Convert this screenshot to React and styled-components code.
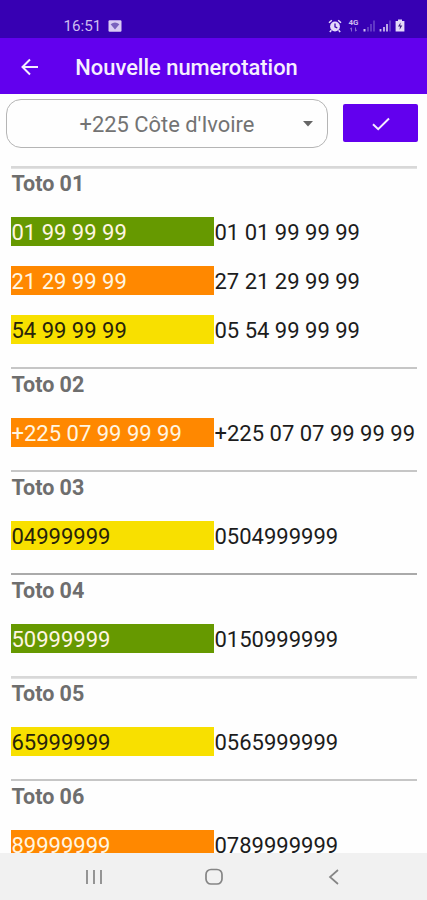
import React from "react";
import styled, { createGlobalStyle } from "styled-components";

const contacts = [
  {
    name: "Toto 01",
    soft: true,
    numbers: [
      ["01 99 99 99", "01 01 99 99 99", "green"],
      ["21 29 99 99", "27 21 29 99 99", "orange"],
      ["54 99 99 99", "05 54 99 99 99", "yellow"],
    ],
  },
  {
    name: "Toto 02",
    numbers: [["+225 07 99 99 99", "+225 07 07 99 99 99", "orange"]],
  },
  { name: "Toto 03", numbers: [["04999999", "0504999999", "yellow"]] },
  { name: "Toto 04", dark: true, numbers: [["50999999", "0150999999", "green"]] },
  { name: "Toto 05", soft: true, numbers: [["65999999", "0565999999", "yellow"]] },
  { name: "Toto 06", numbers: [["89999999", "0789999999", "orange"]] },
];

const operators = {
  green: "#669900",
  orange: "#ff8800",
  yellow: "#f8e000",
};

function App() {
  return (
    <Screen>
      <GlobalStyle />
      <StatusBar>
        <Clock>16:51</Clock>
        <WifiCard />
        <StatusIcons />
      </StatusBar>
      <AppBar>
        <BackArrow viewBox="0 0 18 18">
          <path d="M17 9H1.5M9 1.5L1.5 9L9 16.5" />
        </BackArrow>
        <Title>Nouvelle numerotation</Title>
      </AppBar>
      <Toolbar>
        <Select>
          <Country>+225 Côte d'Ivoire</Country>
          <Caret viewBox="0 0 10 6">
            <path d="M0 0H10L5 5.5Z" />
          </Caret>
        </Select>
        <Confirm>
          <Check viewBox="0 0 18 14">
            <path d="M1 7.2L6.2 12.2L17 1.5" />
          </Check>
        </Confirm>
      </Toolbar>
      <List>
        {contacts.map((contact) => (
          <Contact key={contact.name}>
            <Divider $soft={contact.soft} $dark={contact.dark} />
            <Name>{contact.name}</Name>
            {contact.numbers.map(([before, after, operator]) => (
              <Row key={before}>
                <OldNumber $operator={operator}>{before}</OldNumber>
                <NewNumber>{after}</NewNumber>
              </Row>
            ))}
          </Contact>
        ))}
      </List>
      <NavBar>
        <NavIcon viewBox="0 0 18 18">
          <path d="M2 2V16M9 2V16M16 2V16" />
        </NavIcon>
        <NavIcon viewBox="0 0 18 18">
          <rect x="1" y="1.5" width="16" height="14.5" rx="5" />
        </NavIcon>
        <NavIcon viewBox="0 0 18 18">
          <path d="M13 2L5 9L13 16" />
        </NavIcon>
      </NavBar>
    </Screen>
  );
}

function WifiCard() {
  return (
    <svg width="14" height="12" viewBox="0 0 14 12">
      <rect x="0.5" y="0.3" width="13" height="11.4" rx="1.2" fill="#d9ccf4" />
      <path d="M2.6 4.2Q7 0.8 11.4 4.2L7 9.6Z" fill="#7a62bd" />
    </svg>
  );
}

function StatusIcons() {
  return (
    <Indicators>
      <svg width="14" height="14" viewBox="0 0 14 14">
        <circle cx="7" cy="7.5" r="4.9" fill="#e4dafa" />
        <path
          d="M1 3.8L3.8 1.2M10.2 1.2L13 3.8M3.4 11.2L1.8 13M10.6 11.2L12.2 13"
          stroke="#e4dafa"
          strokeWidth="1.5"
        />
        <path d="M7 4.5V7.8L9.3 8.8" fill="none" stroke="#3a00b0" strokeWidth="1.3" />
      </svg>
      <Network>
        <NetworkType>4G</NetworkType>
        <svg width="9" height="5" viewBox="0 0 9 5">
          <path d="M2.5 4.5V1M1 2.2L2.5 0.8M6.5 0.5V4M8 2.8L6.5 4.2" fill="none" stroke="#8766d3" />
        </svg>
      </Network>
      <svg width="13" height="13" viewBox="0 0 13 13">
        <path d="M1.5 10V12.5" stroke="#d1c0ef" strokeWidth="2" />
        <path d="M5 8V12.5M8 5V12.5M11 1.5V12.5" stroke="#6841c8" strokeWidth="1.7" />
      </svg>
      <svg width="13" height="13" viewBox="0 0 13 13">
        <path d="M1.5 10V12.5M5 8V12.5M8 5V12.5" stroke="#c8b7eb" strokeWidth="1.8" />
        <path d="M11 1.5V12.5" stroke="#6841c8" strokeWidth="1.7" />
      </svg>
      <svg width="10" height="13" viewBox="0 0 10 13">
        <path d="M3 0.5H7V2H9.4V12.5H0.6V2H3Z" fill="#e4dafa" />
        <path d="M5.6 3.5L3 7.5H5L4.6 10.8L7.3 6.6H5.2Z" fill="#3a1b80" />
      </svg>
    </Indicators>
  );
}

export default App;

const GlobalStyle = createGlobalStyle`
  * {
    box-sizing: border-box;
  }

  body {
    margin: 0;
    background: #fefefe;
    font-family: Roboto, "Liberation Sans", sans-serif;
  }
`;

const Screen = styled.div`
  width: 427px;
  height: 900px;
  display: flex;
  flex-direction: column;
  overflow: hidden;
  background: #fefefe;
`;

const StatusBar = styled.div`
  height: 38px;
  flex-shrink: 0;
  display: flex;
  align-items: center;
  padding: 13px 22px 0 63.5px;
  background: #3700b3;
`;

const Clock = styled.span`
  width: 44.5px;
  font-size: 15.2px;
  line-height: 16px;
  color: #cdbcf0;
`;

const Indicators = styled.div`
  display: flex;
  align-items: center;
  gap: 3px;
  margin-left: auto;
`;

const Network = styled.div`
  width: 13px;
  display: flex;
  flex-direction: column;
  align-items: center;
  margin-left: 2px;
`;

const NetworkType = styled.span`
  font-size: 8px;
  font-weight: 700;
  line-height: 8px;
  color: #cdbcf0;
`;

const AppBar = styled.div`
  height: 56px;
  flex-shrink: 0;
  display: flex;
  align-items: center;
  padding: 1px 20px 0 21px;
  background: #6200ee;
`;

const BackArrow = styled.svg`
  width: 18px;
  height: 18px;
  fill: none;
  stroke: #f4ecfe;
  stroke-width: 2;
`;

const Title = styled.h1`
  margin: 2px 0 0 36.3px;
  font-size: 21.9px;
  font-weight: 500;
  line-height: 28px;
  color: #f6effe;
`;

const Toolbar = styled.div`
  height: 72px;
  flex-shrink: 0;
  display: flex;
  align-items: flex-start;
  padding: 5px 9px 0 6px;
`;

const Select = styled.div`
  width: 322px;
  height: 49px;
  display: flex;
  align-items: center;
  padding-right: 14px;
  border: 1.5px solid #b5b5b5;
  border-radius: 15px;
`;

const Country = styled.span`
  flex: 1;
  padding: 2px 0 0 24px;
  font-size: 21.9px;
  line-height: 28px;
  text-align: center;
  color: #737373;
`;

const Caret = styled.svg`
  width: 10px;
  height: 6px;
  fill: #666;
`;

const Confirm = styled.button`
  width: 75px;
  height: 38px;
  display: flex;
  align-items: center;
  justify-content: center;
  margin: 5px 0 0 auto;
  padding: 2px 0 0;
  border: 0;
  border-radius: 2px;
  background: #6200ee;
`;

const Check = styled.svg`
  width: 18px;
  height: 14px;
  fill: none;
  stroke: #f4ecfe;
  stroke-width: 2;
`;

const List = styled.div`
  flex: 1;
  min-height: 0;
  overflow: hidden;
  padding: 0 10px 0 11px;
`;

const Contact = styled.section`
  padding-bottom: 1px;
`;

const Divider = styled.div`
  height: 2px;
  background: ${(props) => (props.$dark ? "#aaa" : props.$soft ? "#d8d8d8" : "#c6c6c6")};
  box-shadow: ${(props) => (props.$soft ? "0 1px #e2e2e2" : "none")};
`;

const Name = styled.h2`
  height: 29px;
  margin: 0 0 20px;
  padding-left: 0.5px;
  font-size: 21.5px;
  font-weight: 700;
  line-height: 31px;
  color: #6e6e6e;
`;

const Row = styled.div`
  height: 29px;
  display: flex;
  margin-bottom: 20px;
  font-size: 22px;
  line-height: 31px;
  white-space: nowrap;

  &:last-child {
    margin-bottom: 22px;
  }
`;

const OldNumber = styled.div`
  width: 203px;
  flex-shrink: 0;
  padding-left: 0.5px;
  color: ${(props) => (props.$operator === "yellow" ? "#28240a" : "#fff6e2")};
  background: ${(props) => operators[props.$operator]};
`;

const NewNumber = styled.div`
  padding-left: 0.5px;
  color: #1c1c1c;
`;

const NavBar = styled.div`
  height: 47px;
  flex-shrink: 0;
  display: flex;
  align-items: center;
  justify-content: center;
  gap: 102px;
  padding-top: 1px;
  background: #f1f1f1;
`;

const NavIcon = styled.svg`
  width: 18px;
  height: 18px;
  fill: none;
  stroke: #858585;
  stroke-width: 1.7;
`;
